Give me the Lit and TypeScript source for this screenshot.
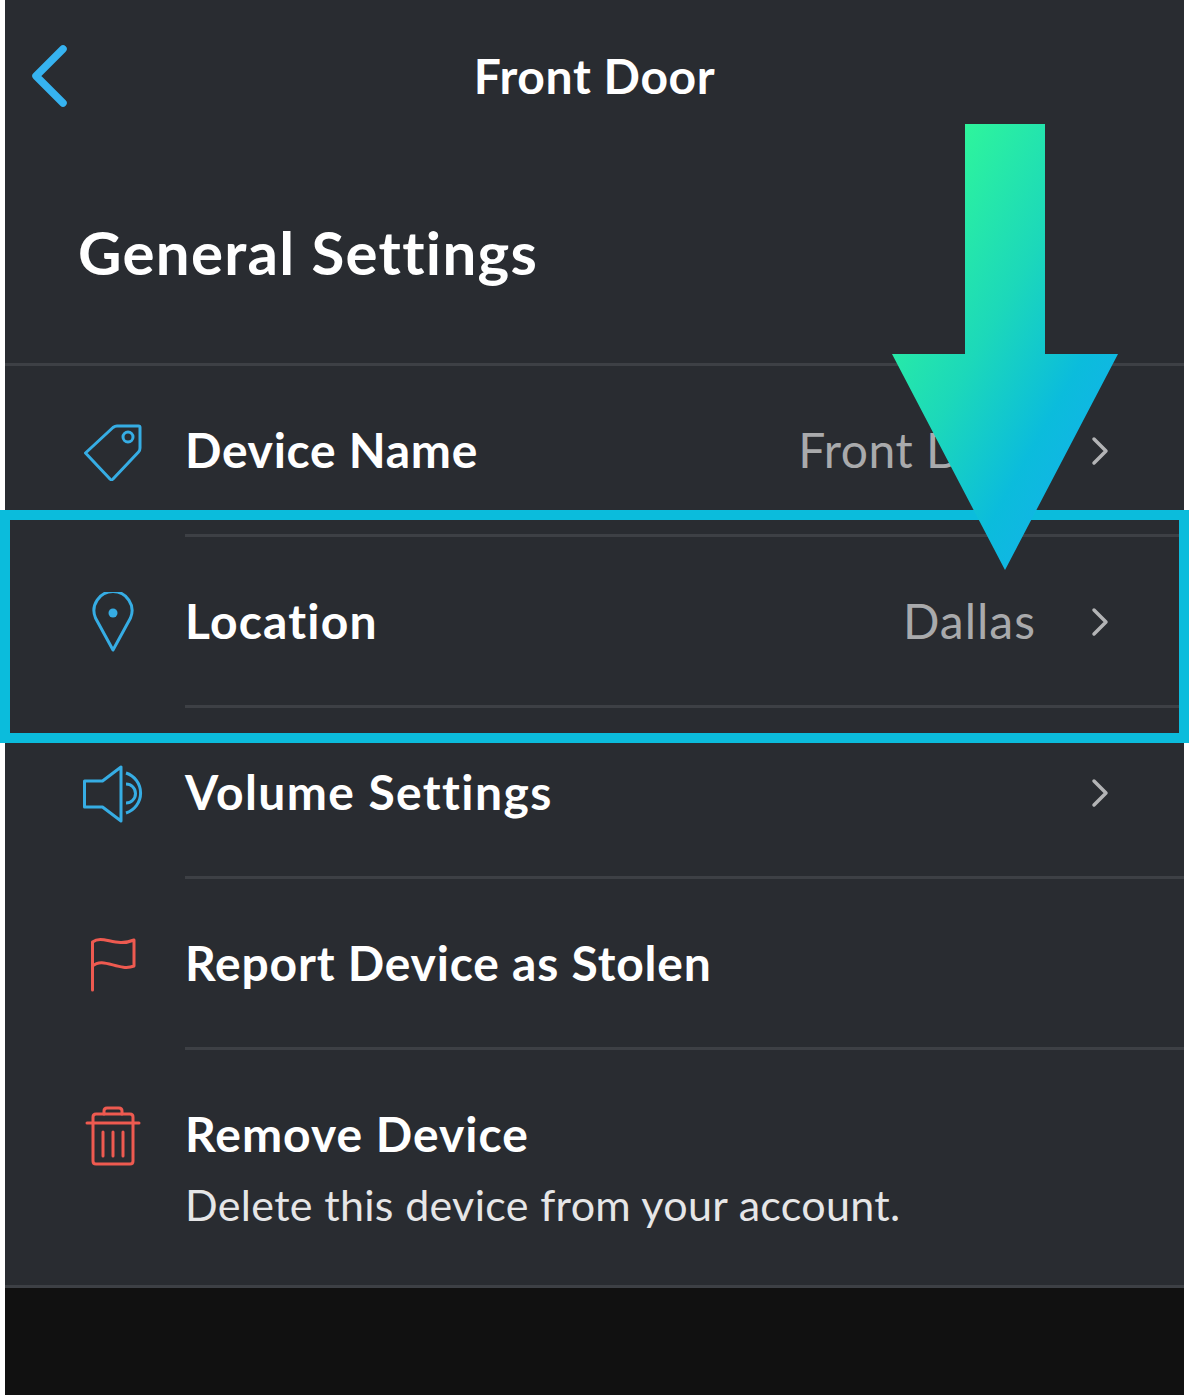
import { LitElement, html, css, svg } from 'lit';
import { customElement } from 'lit/decorators.js';

const BLUE = '#36ade4';
const RED = '#ee5a50';

const icons: Record<string, unknown> = {
    tag: svg`<svg class="icon" width="60" height="60" viewBox="0 0 60 60" fill="none" stroke="${BLUE}" stroke-width="3" stroke-linejoin="round" stroke-linecap="round">
        <path d="M2.500 32 L30 6.500 Q32 5 34 5 L55.500 5 Q57 5 57 6.500 L57 27 Q57 29.500 55.500 31 L30 58 Q28.500 59.500 27 58 Z"/>
        <circle cx="45" cy="16" r="5"/>
    </svg>`,
    pin: svg`<svg class="icon" width="60" height="60" viewBox="0 0 60 60" fill="none" stroke="${BLUE}" stroke-width="3" stroke-linejoin="round">
        <path d="M30 58 L12.500 26 A19 19 0 1 1 47.500 26 Z"/>
        <circle cx="30" cy="21" r="4.500" fill="${BLUE}" stroke="none"/>
    </svg>`,
    speaker: svg`<svg class="icon" width="60" height="60" viewBox="0 0 60 60" fill="none" stroke="${BLUE}" stroke-width="3" stroke-linejoin="round" stroke-linecap="round">
        <path d="M1.500 18 L19.500 18 L38 4 L38 58 L19.500 44 L1.500 44 Z"/>
        <path d="M43 10 A21 21 0 0 1 43 50" stroke-linecap="butt"/>
        <path d="M43 21 A9.500 9.500 0 0 1 43 40" stroke-linecap="butt"/>
    </svg>`,
    flag: svg`<svg class="icon" width="60" height="60" viewBox="0 0 60 60" fill="none" stroke="${RED}" stroke-width="3" stroke-linejoin="round" stroke-linecap="round">
        <path d="M9.500 56 L9.500 8 C20 0 32 14 51 6 L51 32 C36 38 20 22 9.500 32"/>
    </svg>`,
    trash: svg`<svg class="icon" width="60" height="62" viewBox="0 0 60 62" fill="none" stroke="${RED}" stroke-width="3" stroke-linejoin="round" stroke-linecap="round">
        <path d="M4 17 L56 17"/>
        <path d="M10 17 L10 11 Q10 8 13 8 L47 8 Q50 8 50 11 L50 55 Q50 58 47 58 L13 58 Q10 58 10 55 Z"/>
        <path d="M21 8 L21 5 Q21 2 24 2 L36 2 Q39 2 39 5 L39 8"/>
        <path d="M20 26 L20 50 M30 26 L30 50 M40 26 L40 50"/>
    </svg>`,
};

const chevron = svg`<svg class="chevron" width="18" height="30" viewBox="0 0 18 30" fill="none" stroke="#b3b4b6" stroke-width="3.500" stroke-linecap="round" stroke-linejoin="round"><path d="M3 3 L15 15 L3 27"/></svg>`;

interface Row {
    icon: string;
    label: string;
    value?: string;
    arrow: boolean;
    spacing: number;
    valueSpacing?: number;
}

const rows: Row[] = [
    { icon: 'tag', label: 'Device Name', value: 'Front Door', arrow: true, spacing: 0.7, valueSpacing: 0.5 },
    { icon: 'pin', label: 'Location', value: 'Dallas', arrow: true, spacing: 1.2, valueSpacing: 1 },
    { icon: 'speaker', label: 'Volume Settings', arrow: true, spacing: 1.4 },
    { icon: 'flag', label: 'Report Device as Stolen', arrow: false, spacing: 0.8 },
];

@customElement('app-root')
export class AppRoot extends LitElement {
    static styles = css`
        :host {
            display: block;
            position: relative;
            width: 1189px;
            height: 1395px;
            overflow: hidden;
            background: #fff;
            font-family: Lato, 'Open Sans', sans-serif;
            font-variant-ligatures: none;
        }

        .screen {
            margin: 0 5px;
            height: 1395px;
            background: #111111;
        }

        .panel {
            background: #292c31;
            height: 1288px;
            box-sizing: border-box;
            border-bottom: 3px solid #3d4045;
        }

        .topbar {
            display: flex;
            align-items: center;
            justify-content: center;
            position: relative;
            height: 150px;
            color: #fff;
            font-size: 48px;
            font-weight: 700;
            letter-spacing: 0.6px;
        }

        .back {
            position: absolute;
            left: 24px;
            top: 45px;
        }

        .heading {
            margin: 0;
            height: 216px;
            padding-left: 73px;
            box-sizing: border-box;
            border-bottom: 3px solid #3d4045;
            color: #fff;
            font-size: 60px;
            font-weight: 700;
            letter-spacing: 1.3px;
            line-height: 204px;
        }

        .row {
            display: flex;
            align-items: stretch;
            height: 171px;
        }

        .icon-cell {
            flex: 0 0 180px;
            display: flex;
            align-items: center;
            justify-content: center;
            padding-left: 36px;
            padding-bottom: 1px;
            box-sizing: border-box;
        }

        .icon {
            display: block;
        }

        .body {
            flex: 1;
            display: flex;
            align-items: center;
            box-sizing: border-box;
            border-bottom: 3px solid #3d4045;
            padding-right: 75px;
            color: #fff;
            font-size: 48px;
            font-weight: 700;
        }

        .label {
            flex: 1;
            padding-bottom: 2px;
        }

        .value {
            color: #a9aaac;
            font-weight: 400;
            margin-right: 55px;
            padding-bottom: 2px;
        }

        .chevron {
            display: block;
            margin-top: 2px;
        }

        .remove {
            display: flex;
            height: 235px;
        }

        .remove .icon-cell {
            align-items: flex-start;
            padding-top: 56px;
        }

        .remove-body {
            flex: 1;
            padding-top: 53px;
            color: #fff;
        }

        .remove-title {
            font-size: 48px;
            font-weight: 700;
            letter-spacing: 1px;
            line-height: 62px;
        }

        .remove-sub {
            font-size: 43px;
            font-weight: 400;
            letter-spacing: 0.33px;
            line-height: 56px;
            margin-top: 12px;
            color: #e6e6e7;
        }

        .highlight {
            position: absolute;
            left: 0;
            top: 510px;
            width: 1189px;
            height: 233px;
            box-sizing: border-box;
            border: 10px solid #0bbcdc;
        }

        .arrow {
            position: absolute;
            left: 891px;
            top: 124px;
        }
    `;

    render() {
        return html`
            <div class="screen">
                <div class="panel">
                    <div class="topbar">
                        <svg class="back" width="44" height="64" viewBox="0 0 44 64" fill="none" stroke="#36b3f0" stroke-width="7.500" stroke-linecap="round" stroke-linejoin="round"><path d="M34 4 L7 31 L34 58"/></svg>
                        Front Door
                    </div>
                    <h1 class="heading">General Settings</h1>
                    ${rows.map(
                        (r) => html`
                            <div class="row">
                                <div class="icon-cell">${icons[r.icon]}</div>
                                <div class="body">
                                    <span class="label" style="letter-spacing: ${r.spacing}px">${r.label}</span>
                                    ${r.value ? html`<span class="value" style="letter-spacing: ${r.valueSpacing}px">${r.value}</span>` : ''}
                                    ${r.arrow ? chevron : ''}
                                </div>
                            </div>
                        `,
                    )}
                    <div class="remove">
                        <div class="icon-cell">${icons.trash}</div>
                        <div class="remove-body">
                            <div class="remove-title">Remove Device</div>
                            <div class="remove-sub">Delete this device from your account.</div>
                        </div>
                    </div>
                </div>
            </div>
            <div class="highlight"></div>
            <svg class="arrow" width="228" height="447" viewBox="0 0 228 447">
                <defs>
                    <linearGradient id="arrow-fill" gradientUnits="userSpaceOnUse" x1="74" y1="0" x2="311" y2="133">
                        <stop offset="0" stop-color="#2ef59c"></stop>
                        <stop offset="0.45" stop-color="#1cd8ba"></stop>
                        <stop offset="0.8" stop-color="#0bbcdc"></stop>
                        <stop offset="1" stop-color="#12b5e5"></stop>
                    </linearGradient>
                </defs>
                <path d="M74 0 L154 0 L154 230 L227 230 L114 446 L1 230 L74 230 Z" fill="url(#arrow-fill)"></path>
            </svg>
        `;
    }
}
